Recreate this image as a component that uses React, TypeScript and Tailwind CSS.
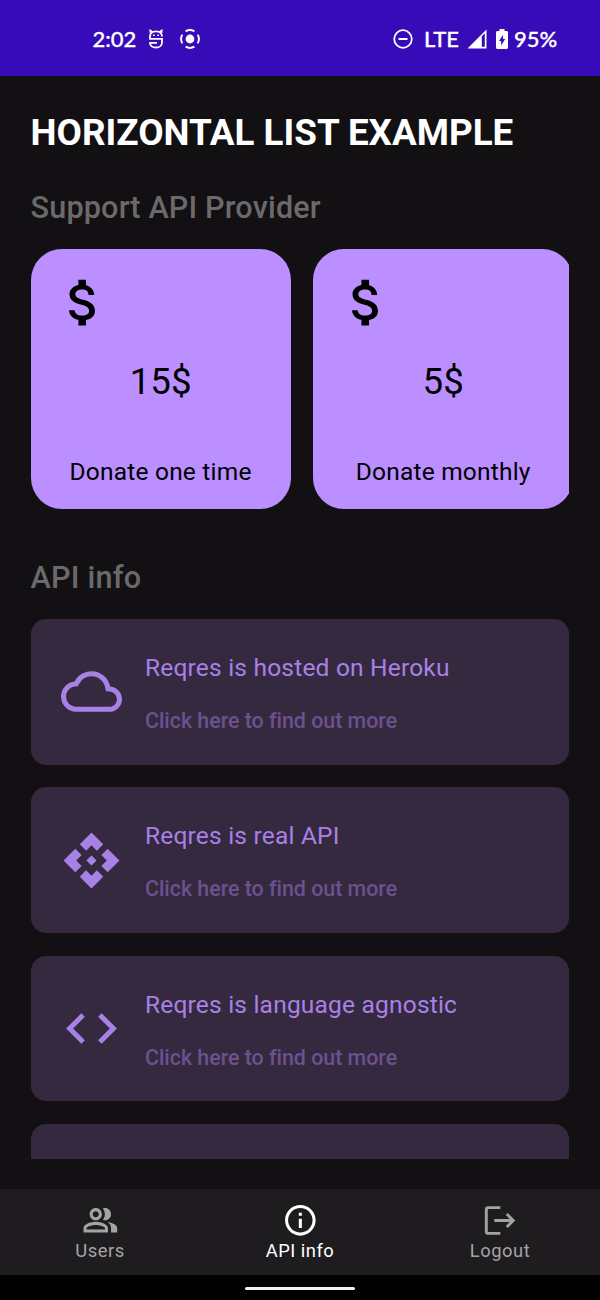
import type { ReactNode } from "react";
import {
  MdApi,
  MdAttachMoney,
  MdCode,
  MdOutlineCloud,
  MdOutlineInfo,
  MdOutlinePeopleAlt,
} from "react-icons/md";

function AndroidHeadIcon() {
  return (
    <svg viewBox="0 0 16 20" className="h-5 w-4" fill="none" stroke="white" strokeWidth="1.8">
      <path d="M2.2 3.800V1.200L4.600 2.800M13.800 3.800V1.200L11.400 2.800" strokeWidth="1.400" />
      <path d="M14 7.600C14 4.200 11.600 2.400 8 2.400S2 4.200 2 7.600v2.200h12v3.600c0 3-2.500 5.100-6 5.100s-6-1.800-6-4.600h7" />
      <path d="M5 6.300h1.700M9.300 6.300H11" strokeWidth="1.600" />
    </svg>
  );
}

function RecordIcon() {
  return (
    <svg viewBox="0 0 20 20" className="h-5 w-5" fill="none" stroke="white" strokeWidth="1.9">
      <circle cx="10" cy="10" r="4.400" fill="white" stroke="none" />
      <path d="M5.600 2.300a9 9 0 0 1 8.800 0M5.600 17.700a9 9 0 0 0 8.800 0M2.300 5.600a9 9 0 0 0 0 8.800M17.700 5.600a9 9 0 0 1 0 8.800" />
    </svg>
  );
}

function StatusBar() {
  return (
    <header className="flex h-[75.5px] shrink-0 items-center bg-[#370bb8] pt-[3px] pr-[43px] pl-[92.500px] font-['Lato','Roboto',sans-serif] text-[22px] font-medium text-white [-webkit-text-stroke:0.3px_white]">
      <span className="w-[55.500px] pb-[2px]">2:02</span>
      <AndroidHeadIcon />
      <span className="ml-4 flex">
        <RecordIcon />
      </span>
      <div className="ml-auto flex items-center">
        <svg viewBox="0 0 20 20" className="h-5 w-5" fill="none" stroke="white" strokeWidth="1.8">
          <circle cx="10" cy="10" r="8.800" />
          <path d="M5.500 10h9" strokeWidth="2" />
        </svg>
        <span className="ml-[11px] w-[43px] pb-[2px]">LTE</span>
        <svg viewBox="0 0 20 20" className="h-5 w-5" fill="white">
          <path fillRule="evenodd" d="M19.500.5v19H.5ZM14.800 7.200v10.600h3V4.200Z" />
        </svg>
        <svg viewBox="0 0 12 20" className="ml-[9px] h-5 w-3" fill="white">
          <path
            fillRule="evenodd"
            d="M3.500 0h5v2h2C11.400 2 12 2.600 12 3.500v15c0 .9-.6 1.500-1.500 1.500h-9C.6 20 0 19.400 0 18.500v-15C0 2.600.6 2 1.500 2h2ZM7 6l-4 6h2.200v4.500L9.200 10H7Z"
          />
        </svg>
        <span className="ml-[6px] w-[43px] pb-[2px]">95%</span>
      </div>
    </header>
  );
}

function DonateCard({ amount, label }: { amount: string; label: string }) {
  return (
    <article className="flex h-[260px] w-[260px] shrink-0 flex-col rounded-[31px] bg-[#bb8fff] p-[23px] text-black">
      <MdAttachMoney className="-ml-[0.5px] size-[61px] shrink-0" />
      <p className="mt-[24px] text-center text-[36.7px] leading-[49px]">{amount}</p>
      <p className="mt-auto text-center text-[24.5px] leading-[29px] tracking-[0.2px] whitespace-nowrap">
        {label}
      </p>
    </article>
  );
}

function InfoCard({ icon, title }: { icon: ReactNode; title: string }) {
  return (
    <article className="flex h-[145.5px] shrink-0 items-center gap-[23px] rounded-[15px] bg-[#35293f] pl-[30.4px] text-[#a881e6]">
      {icon}
      <div className="flex flex-col gap-[24px] pt-[4px]">
        <h3 className="text-[24.5px] leading-[29px] tracking-[0.2px]">{title}</h3>
        <p className="text-[21.4px] leading-[29px] font-medium tracking-[-0.02px] text-[#6c518f]">
          Click here to find out more
        </p>
      </div>
    </article>
  );
}

function NavItem({ icon, label, active }: { icon: ReactNode; label: string; active?: boolean }) {
  return (
    <a className={`flex flex-1 flex-col items-center pt-[13px] ${active ? "text-white" : "text-[#a5a4a5]"}`}>
      {icon}
      <span className="mt-[1px] text-[18.4px] leading-[22px] tracking-[0.5px]">{label}</span>
    </a>
  );
}

export default function App() {
  return (
    <div className="flex h-[1300px] w-[600px] flex-col overflow-hidden bg-[#121012] font-['Roboto',sans-serif]">
      <StatusBar />
      <main className="flex h-[1083.5px] shrink-0 flex-col overflow-hidden px-[30.6px]">
        <h1 className="mt-[35px] text-[36.8px] leading-[43px] font-bold whitespace-nowrap text-white">
          HORIZONTAL LIST EXAMPLE
        </h1>
        <h2 className="mt-[36.4px] text-[30.6px] leading-[36px] font-medium tracking-[0.15px] text-[#6b696b]">
          Support API Provider
        </h2>
        <section className="mt-[23.1px] flex shrink-0 gap-[22.6px] overflow-hidden">
          <DonateCard amount="15$" label="Donate one time" />
          <DonateCard amount="5$" label="Donate monthly" />
        </section>
        <h2 className="mt-[51px] text-[30.6px] leading-[36px] font-medium tracking-[0.2px] text-[#6b696b]">
          API info
        </h2>
        <section className="mt-[23.2px] flex flex-col gap-[22.8px]">
          <InfoCard icon={<MdOutlineCloud className="size-[61px]" />} title="Reqres is hosted on Heroku" />
          <InfoCard icon={<MdApi className="size-[61px]" />} title="Reqres is real API" />
          <InfoCard icon={<MdCode className="size-[61px]" />} title="Reqres is language agnostic" />
          <div className="h-[145px] shrink-0 rounded-[15px] bg-[#35293f]" />
        </section>
      </main>
      <nav className="mt-[30px] flex h-[86px] shrink-0 bg-[#1e1c1e]">
        <NavItem icon={<MdOutlinePeopleAlt className="size-[36.7px]" />} label="Users" />
        <NavItem icon={<MdOutlineInfo className="size-[36.7px]" />} label="API info" active />
        <NavItem
          icon={
            <svg viewBox="0 0 36.7 36.7" className="size-[36.7px]" fill="none" stroke="currentColor" strokeWidth="2.9">
              <path d="M18.300 5.600H6.300q-2 0-2 2v21.800q0 2 2 2h12M12.300 18.500H31" />
              <path d="m24.800 12 6.500 6.500-6.500 6.500" />
            </svg>
          }
          label="Logout"
        />
      </nav>
      <footer className="flex flex-1 items-center justify-center bg-black">
        <div className="mt-[2px] h-[3.5px] w-[110px] rounded-full bg-[#f2f0f2]" />
      </footer>
    </div>
  );
}
